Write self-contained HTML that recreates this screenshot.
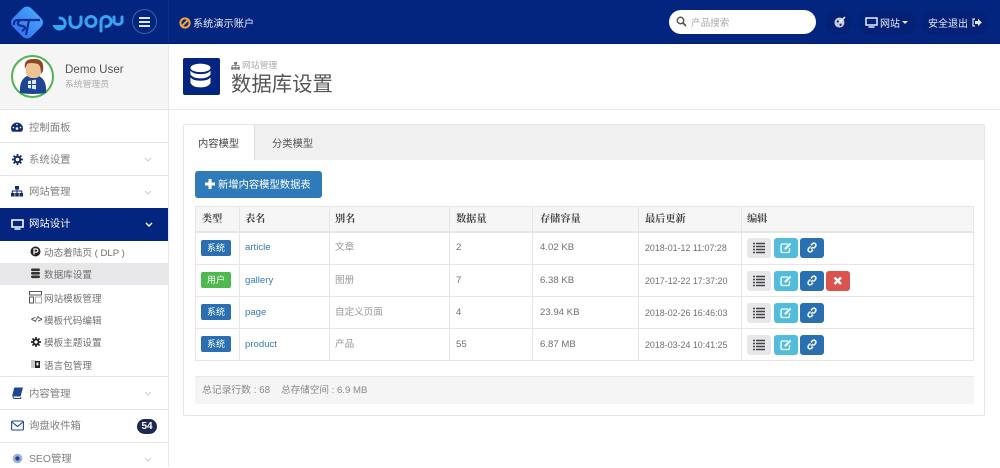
<!DOCTYPE html>
<html><head><meta charset="utf-8"><style>
*{box-sizing:border-box}
html,body{margin:0;padding:0}
body{width:1000px;height:466px;overflow:hidden;position:relative;background:#fff;font-family:"Liberation Sans","Noto Sans CJK SC",sans-serif;font-size:10px;color:#666;filter:blur(.25px)}
.a{position:absolute;white-space:nowrap}
.line{position:absolute;background:#e6e6e6}
.mi{position:absolute;left:0;width:168px;font-size:10.4px;color:#808080;line-height:16px}
.mi span{position:absolute;left:29px;top:0}
.sub{position:absolute;left:44px;font-size:9.6px;color:#707070;line-height:14px;white-space:nowrap}
.th{position:absolute;top:207px;height:26px;font:bold 10.2px/25px "Liberation Serif","Noto Serif CJK SC",serif;color:#444}
.td{position:absolute;font-size:9.6px;color:#707070;line-height:14px;white-space:nowrap}
.lnk{color:#337ab7}
.lab{position:absolute;left:201px;width:30px;height:16px;border-radius:2px;color:#fff;background:#2a6fb0;font-size:9px;line-height:17px;text-align:center}
.btn{position:absolute;width:24px;height:20px;border-radius:3px}
.btn svg{position:absolute;left:6px;top:4px}
.g{background:#e7e7e9}.c{background:#52bcdc}.b{background:#2a70b0}.r{background:#d9534f}
</style></head><body>
<!-- top bar -->
<div class="a" style="left:0;top:0;width:1000px;height:44px;background:#03257f"></div>
<div class="a" style="left:168px;top:0;width:1px;height:44px;background:#0a2f8c"></div>
<svg class="a" style="left:9px;top:5px" width="36" height="35" viewBox="0 0 36 35">
<defs><linearGradient id="lg" x1="1" y1="0" x2="0" y2="1"><stop offset="0" stop-color="#48b4fb"/><stop offset="1" stop-color="#3165ef"/></linearGradient></defs>
<path d="M14 3 Q18 0 22 3 L32 13 Q36 17.500 32 22 L22 32 Q18 35 14 32 L4 22 Q0 17.500 4 13Z" fill="url(#lg)"/>
<path d="M5 20 Q4 15 10 15 H31 M11 15 Q6 20 13 21 Q19 22 13 26 M20 15 L17 30" fill="none" stroke="#0b2c8f" stroke-width="2.200"/>
</svg>
<svg class="a" style="left:47px;top:12px" width="78" height="22" viewBox="0 0 78 22" fill="none" stroke="#3aa4f2" stroke-width="3" stroke-linecap="round">
<path d="M13 6 A5.500 5.500 0 1 1 8 14.500 H16"/>
<path d="M23 5 V10 A5 5 0 0 0 34 10 V5"/>
<circle cx="44" cy="9.500" r="5"/>
<path d="M54 19 V9.500 A5 5 0 1 1 59 14.500"/>
<path d="M67 5 V10 A4.500 4.500 0 0 0 75 10 V5"/>
</svg>
<div class="a" style="left:132px;top:9px;width:25px;height:25px;border:1px solid #40609f;border-radius:50%"></div>
<div class="a" style="left:139px;top:17px;width:11px;height:2px;background:#dfe6f5;box-shadow:0 4px 0 #dfe6f5,0 8px 0 #dfe6f5"></div>
<svg class="a" style="left:179px;top:17px" width="12" height="12" viewBox="0 0 12 12"><circle cx="6" cy="6" r="4.600" fill="none" stroke="#f0a63c" stroke-width="2"/><path d="M2.800 9.200L9.200 2.800" stroke="#f0a63c" stroke-width="2"/></svg>
<div class="a" style="left:193px;top:17px;font-size:10.200px;line-height:15px;color:#e6ebf6">系统演示账户</div>
<div class="a" style="left:669px;top:10px;width:147px;height:24px;background:#fff;border-radius:12px"></div>
<svg class="a" style="left:676px;top:16px" width="11" height="11" viewBox="0 0 11 11"><circle cx="4.500" cy="4.500" r="3.200" fill="none" stroke="#555" stroke-width="1.500"/><path d="M7 7L10 10" stroke="#555" stroke-width="1.800"/></svg>
<div class="a" style="left:691px;top:17px;font-size:9.600px;line-height:14px;color:#aaa">产品搜索</div>
<div class="a" style="left:825px;top:10px;width:27px;height:25px;border-radius:13px;background:#032277"></div>
<svg class="a" style="left:834px;top:16px" width="12" height="12" viewBox="0 0 11 11"><circle cx="5" cy="6" r="4.600" fill="#c5cde0"/><circle cx="3.500" cy="5" r="1" fill="#04216f"/><circle cx="6" cy="8" r="1" fill="#04216f"/><path d="M5 6L10 1" stroke="#eef" stroke-width="1.500"/></svg>
<div class="a" style="left:858px;top:10px;width:58px;height:25px;border-radius:13px;background:#032277"></div>
<svg class="a" style="left:865px;top:17px" width="13" height="11" viewBox="0 0 13 11"><path d="M1 1H12V8H1Z" fill="none" stroke="#e6ebf5" stroke-width="1.500"/><path d="M3.500 10H9.500" stroke="#e6ebf5" stroke-width="1.500"/></svg>
<div class="a" style="left:880px;top:17px;font-size:10px;line-height:15px;color:#e6ebf6">网站</div>
<div class="a" style="left:902px;top:21px;border:3px solid transparent;border-top:3.500px solid #e6ebf5;border-bottom:0"></div>
<div class="a" style="left:921px;top:10px;width:68px;height:25px;border-radius:13px;background:#032277"></div>
<div class="a" style="left:928px;top:17px;font-size:10px;line-height:15px;color:#e6ebf6">安全退出</div>
<svg class="a" style="left:972px;top:18px" width="10" height="9" viewBox="0 0 10 9"><path d="M3 1H1V8H3" fill="none" stroke="#dfe6f5" stroke-width="1.200"/><path d="M3 3H6V0.800L9.800 4.500L6 8.200V6H3Z" fill="#dfe6f5"/></svg>
<div class="a" style="left:0;top:43px;width:1000px;height:1px;background:#021d66"></div>

<!-- sidebar -->
<div class="a" style="left:0;top:44px;width:168px;height:66px;background:#f5f5f5"></div>
<div class="a" style="left:168px;top:44px;width:1px;height:422px;background:#e8e8e8"></div>
<div class="line" style="left:0;top:109px;width:168px;height:1px"></div>
<div class="a" style="left:11px;top:55px;width:43px;height:43px;border-radius:50%;background:#fff;border:2px solid #4db54f"></div>
<svg class="a" style="left:18px;top:58px" width="30" height="37" viewBox="0 0 30 37">
<path d="M2 35 Q1 22 9 18 H21 Q29 22 28 35 Q15 37 2 35Z" fill="#1d4591"/>
<rect x="8" y="3" width="15" height="17" rx="6" fill="#eec394"/>
<path d="M7 11 Q5 1 15 1 Q27 0 25 13 L23 16 Q23 8 20 6 Q12 4 9 6Z" fill="#8b4a25"/>
<path d="M10 23l3-.5v3.500h-3zM14 22.300l4-.7v4.400h-4zM10 27h3v3.500l-3-.5zM14 27h4v4.400l-4-.7z" fill="#dfe8f5"/>
</svg>
<div class="a" style="left:65px;top:62px;font-size:11.600px;line-height:15px;color:#555">Demo User</div>
<div class="a" style="left:65px;top:77px;font-size:8.800px;line-height:14px;color:#aaa">系统管理员</div>

<div class="line" style="left:0;top:142px;width:168px;height:1px"></div>
<div class="line" style="left:0;top:175px;width:168px;height:1px"></div>
<div class="line" style="left:0;top:376px;width:168px;height:1px"></div>
<div class="line" style="left:0;top:409px;width:168px;height:1px"></div>
<div class="line" style="left:0;top:442px;width:168px;height:1px"></div>

<div class="mi" style="top:121px"><span>控制面板</span></div>
<svg class="a" style="left:11px;top:122px" width="12" height="10" viewBox="0 0 12 10"><path d="M0 6.500A6 6 0 1 1 12 6.500Q12 8.500 10.500 9.800H1.500Q0 8.500 0 6.500Z" fill="#132d6e"/><circle cx="6" cy="6.500" r="1.300" fill="#fff"/><circle cx="2.500" cy="5.500" r=".8" fill="#fff"/><circle cx="9.500" cy="5.500" r=".8" fill="#fff"/><circle cx="6" cy="2.500" r=".8" fill="#fff"/></svg>
<div class="mi" style="top:153px"><span>系统设置</span></div>
<svg class="a" style="left:12px;top:154px" width="11" height="11" viewBox="0 0 11 11"><circle cx="5.500" cy="5.500" r="2.800" fill="none" stroke="#132d6e" stroke-width="2"/><path d="M5.500 0V2M5.500 9V11M0 5.500H2M9 5.500H11M1.600 1.600L3 3M8 8L9.400 9.400M1.600 9.400L3 8M8 3L9.400 1.600" stroke="#132d6e" stroke-width="1.800"/></svg>
<div class="mi" style="top:185px"><span>网站管理</span></div>
<svg class="a" style="left:11px;top:186px" width="12" height="11" viewBox="0 0 12 11" fill="#132d6e"><rect x="4" y="0" width="4" height="3.500"/><rect x="0" y="7" width="3.600" height="3.500"/><rect x="4.200" y="7" width="3.600" height="3.500"/><rect x="8.400" y="7" width="3.600" height="3.500"/><path d="M1.300 7V5H10.700V7M6 3V7" fill="none" stroke="#132d6e"/></svg>

<div class="a" style="left:0;top:208px;width:168px;height:33px;background:#03257f"></div>
<svg class="a" style="left:11px;top:219px" width="13" height="11" viewBox="0 0 13 11"><path d="M1 1H12V8H1Z" fill="none" stroke="#fff" stroke-width="1.600"/><path d="M3.500 10H9.500" stroke="#fff" stroke-width="1.500"/></svg>
<div class="a" style="left:29px;top:217px;font-size:10.400px;line-height:16px;color:#fff">网站设计</div>

<div class="a" style="left:0;top:263px;width:168px;height:22px;background:#e7e7e9"></div>
<svg class="a" style="left:30px;top:246px" width="11" height="11" viewBox="0 0 11 11"><circle cx="5.500" cy="5.500" r="5" fill="#222"/><path d="M4 8.500V3H6.300A1.600 1.600 0 0 1 6.300 6.200H4" fill="none" stroke="#fff" stroke-width="1.200"/></svg>
<div class="sub" style="top:247px">动态着陆页 ( DLP )</div>
<svg class="a" style="left:31px;top:268px" width="9" height="11" viewBox="0 0 9 11" fill="#333"><rect y="0.500" width="9" height="2.600" rx="1.200"/><rect y="4" width="9" height="2.600" rx="1.200"/><rect y="7.500" width="9" height="2.600" rx="1.200"/></svg>
<div class="sub" style="top:269px">数据库设置</div>
<svg class="a" style="left:29px;top:291px" width="13" height="13" viewBox="0 0 13 13" fill="none" stroke="#555"><rect x=".5" y=".5" width="12" height="3.500"/><rect x=".5" y="6" width="4" height="6"/><rect x="6.500" y="6" width="6" height="6" stroke="#aaa"/></svg>
<div class="sub" style="top:293px">网站模板管理</div>
<div class="a" style="left:31px;top:314px;font:bold 8px/13px 'Liberation Mono',monospace;color:#444;letter-spacing:-1.500px">&lt;/&gt;</div>
<div class="sub" style="top:315px">模板代码编辑</div>
<svg class="a" style="left:31px;top:337px" width="10" height="10" viewBox="0 0 11 11"><circle cx="5.500" cy="5.500" r="2.800" fill="none" stroke="#222" stroke-width="2"/><path d="M5.500 0V2M5.500 9V11M0 5.500H2M9 5.500H11M1.600 1.600L3 3M8 8L9.400 9.400M1.600 9.400L3 8M8 3L9.400 1.600" stroke="#222" stroke-width="1.800"/></svg>
<div class="sub" style="top:337px">模板主题设置</div>
<svg class="a" style="left:31px;top:359px" width="10" height="11" viewBox="0 0 10 11"><rect x="0" y="1" width="5" height="8" fill="#ccc"/><rect x="4" y="2" width="5" height="7" fill="#222"/><rect x="5.500" y="3.500" width="2" height="3" fill="#fff"/></svg>
<div class="sub" style="top:360px">语言包管理</div>

<div class="mi" style="top:387px"><span>内容管理</span></div>
<svg class="a" style="left:12px;top:387px" width="11" height="12" viewBox="0 0 11 12"><path d="M3 0.500H11L8.600 9.500H1.200Q0 9.500 0.300 8.200L2 1.500Q2.200 .5 3 .5Z" fill="#1f4690"/><path d="M1 9.600Q1 11.500 2.600 11.500H8.600L9 10.200" fill="none" stroke="#1f4690"/></svg>
<div class="mi" style="top:419px"><span>询盘收件箱</span></div>
<svg class="a" style="left:11px;top:420px" width="13" height="11" viewBox="0 0 13 11" fill="none" stroke="#1f4690" stroke-width="1.100"><rect x=".6" y="1" width="11.800" height="9" rx="1"/><path d="M1 2L6.500 6.500L12 2"/></svg>
<div class="a" style="left:137px;top:419px;width:20px;height:15px;border-radius:8px;background:#1e2a4d;color:#fff;font-weight:bold;font-size:10px;line-height:15px;text-align:center">54</div>
<div class="mi" style="top:452px"><span>SEO管理</span></div>
<svg class="a" style="left:12px;top:453px" width="11" height="11" viewBox="0 0 11 11"><circle cx="5.500" cy="5.500" r="4.800" fill="#9eb0d4"/><circle cx="5.500" cy="5.500" r="2.200" fill="#1f4690"/></svg>

<svg class="a" style="left:144px;top:157px" width="8" height="5" viewBox="0 0 8 5"><path d="M1 1L4 4L7 1" fill="none" stroke="#ccc"/></svg>
<svg class="a" style="left:144px;top:190px" width="8" height="5" viewBox="0 0 8 5"><path d="M1 1L4 4L7 1" fill="none" stroke="#ccc"/></svg>
<svg class="a" style="left:145px;top:222px" width="8" height="5" viewBox="0 0 8 5"><path d="M1 1L4 4L7 1" fill="none" stroke="#fff" stroke-width="1.400"/></svg>
<svg class="a" style="left:144px;top:391px" width="8" height="5" viewBox="0 0 8 5"><path d="M1 1L4 4L7 1" fill="none" stroke="#ccc"/></svg>
<svg class="a" style="left:144px;top:457px" width="8" height="5" viewBox="0 0 8 5"><path d="M1 1L4 4L7 1" fill="none" stroke="#ccc"/></svg>

<!-- page header -->
<div class="a" style="left:169px;top:109px;width:831px;height:1px;background:#e8e8e8"></div>
<div class="a" style="left:183px;top:58px;width:37px;height:37px;background:#03257f;border-radius:2px"></div>
<svg class="a" style="left:190px;top:63px" width="21" height="25" viewBox="0 0 22 26" fill="#fff"><ellipse cx="11" cy="5" rx="10.500" ry="4.500"/><path d="M.5 8Q3 11.500 11 11.500T21.500 8V12Q19 16 11 16T.5 12Z"/><path d="M.5 15Q3 18.500 11 18.500T21.500 15V21Q19 25.500 11 25.500T.5 21Z"/></svg>
<svg class="a" style="left:231px;top:62px" width="9" height="8" viewBox="0 0 12 11" fill="#777"><rect x="4" y="0" width="4" height="3.500"/><rect x="0" y="7" width="3.600" height="3.500"/><rect x="4.200" y="7" width="3.600" height="3.500"/><rect x="8.400" y="7" width="3.600" height="3.500"/><path d="M1.300 7V5H10.700V7M6 3V7" fill="none" stroke="#777"/></svg>
<div class="a" style="left:242px;top:59px;font-size:8.800px;line-height:13px;color:#aaa">网站管理</div>
<div class="a" style="left:231px;top:72px;font-size:20.400px;line-height:27px;color:#555">数据库设置</div>

<!-- panel -->
<div class="a" style="left:183px;top:124px;width:802px;height:292px;background:#fff;border:1px solid #e6e6e6;border-radius:2px"></div>
<div class="a" style="left:184px;top:125px;width:800px;height:35px;background:#f0f0f0"></div>
<div class="a" style="left:184px;top:125px;width:71px;height:35px;background:#fff;border-right:1px solid #ddd"></div>
<div class="a" style="left:198px;top:137px;font-size:10.300px;line-height:15px;color:#444">内容模型</div>
<div class="a" style="left:272px;top:137px;font-size:10.300px;line-height:15px;color:#555">分类模型</div>

<div class="a" style="left:195px;top:171px;width:127px;height:27px;background:#2f7ab8;border-radius:3px"></div>
<svg class="a" style="left:205px;top:179px" width="10" height="10" viewBox="0 0 10 10"><path d="M5 0V10M0 5H10" stroke="#fff" stroke-width="3"/></svg>
<div class="a" style="left:218px;top:178px;font-size:10.300px;line-height:15px;color:#fff">新增内容模型数据表</div>

<!-- table -->
<div class="a" style="left:195px;top:206px;width:779px;height:26px;background:#f6f6f6"></div>
<div class="line" style="left:195px;top:206px;width:779px;height:1px"></div>
<div class="line" style="left:195px;top:231px;width:779px;height:2px"></div>
<div class="line" style="left:195px;top:264px;width:779px;height:1px"></div>
<div class="line" style="left:195px;top:296px;width:779px;height:1px"></div>
<div class="line" style="left:195px;top:328px;width:779px;height:1px"></div>
<div class="line" style="left:195px;top:360px;width:779px;height:1px"></div>
<div class="line" style="left:195px;top:206px;width:1px;height:155px"></div>
<div class="line" style="left:239px;top:206px;width:1px;height:155px"></div>
<div class="line" style="left:329px;top:206px;width:1px;height:155px"></div>
<div class="line" style="left:449px;top:206px;width:1px;height:155px"></div>
<div class="line" style="left:532px;top:206px;width:1px;height:155px"></div>
<div class="line" style="left:638px;top:206px;width:1px;height:155px"></div>
<div class="line" style="left:741px;top:206px;width:1px;height:155px"></div>
<div class="line" style="left:973px;top:206px;width:1px;height:155px"></div>

<div class="th" style="left:202px">类型</div>
<div class="th" style="left:245px">表名</div>
<div class="th" style="left:335px">别名</div>
<div class="th" style="left:456px">数据量</div>
<div class="th" style="left:540px">存储容量</div>
<div class="th" style="left:645px">最后更新</div>
<div class="th" style="left:747px">编辑</div>

<div class="lab" style="top:240px">系统</div>
<div class="lab" style="top:272px;background:#4fb84f">用户</div>
<div class="lab" style="top:304px">系统</div>
<div class="lab" style="top:336px">系统</div>

<div class="td lnk" style="left:245px;top:241px">article</div>
<div class="td lnk" style="left:245px;top:274px">gallery</div>
<div class="td lnk" style="left:245px;top:306px">page</div>
<div class="td lnk" style="left:245px;top:338px">product</div>
<div class="td" style="left:335px;top:241px;color:#999">文章</div>
<div class="td" style="left:335px;top:274px;color:#999">图册</div>
<div class="td" style="left:335px;top:306px;color:#999">自定义页面</div>
<div class="td" style="left:335px;top:338px;color:#999">产品</div>
<div class="td" style="left:456px;top:241px">2</div>
<div class="td" style="left:456px;top:274px">7</div>
<div class="td" style="left:456px;top:306px">4</div>
<div class="td" style="left:456px;top:338px">55</div>
<div class="td" style="left:540px;top:241px">4.02 KB</div>
<div class="td" style="left:540px;top:274px">6.38 KB</div>
<div class="td" style="left:540px;top:306px">23.94 KB</div>
<div class="td" style="left:540px;top:338px">6.87 MB</div>
<div class="td" style="left:645px;top:241px;font-size:8.900px">2018-01-12 11:07:28</div>
<div class="td" style="left:645px;top:274px;font-size:8.900px">2017-12-22 17:37:20</div>
<div class="td" style="left:645px;top:306px;font-size:8.900px">2018-02-26 16:46:03</div>
<div class="td" style="left:645px;top:338px;font-size:8.900px">2018-03-24 10:41:25</div>

<!-- buttons -->
<svg width="0" height="0" style="position:absolute"><defs>
<g id="l"><path d="M0 1.500H2M3 1.500H12M0 4.500H2M3 4.500H12M0 7.500H2M3 7.500H12M0 10.500H2M3 10.500H12" stroke="#444" stroke-width="1.500" fill="none"/></g>
<g id="e"><path d="M8 2H2.500Q1 2 1 3.500V9Q1 10.500 2.500 10.500H8Q9.500 10.500 9.500 9V6" fill="none" stroke="#fff" stroke-width="1.300"/><path d="M4.500 6L10 .8L11.300 2.200L6 7.500H4.500Z" fill="#fff"/></g>
<g id="k"><path d="M5 7L7 5M4.500 4.500L2.700 6.300A2 2 0 0 0 5.500 9.300L7 7.700M7.500 6.500L9.300 4.700A2 2 0 0 0 6.500 1.700L5 3.300" fill="none" stroke="#fff" stroke-width="1.500"/></g>
</defs></svg>
<div class="btn g" style="left:747px;top:238px"><svg width="12" height="12"><use href="#l"/></svg></div>
<div class="btn c" style="left:774px;top:238px"><svg width="12" height="12"><use href="#e"/></svg></div>
<div class="btn b" style="left:800px;top:238px"><svg width="12" height="12"><use href="#k"/></svg></div>
<div class="btn g" style="left:747px;top:271px"><svg width="12" height="12"><use href="#l"/></svg></div>
<div class="btn c" style="left:774px;top:271px"><svg width="12" height="12"><use href="#e"/></svg></div>
<div class="btn b" style="left:800px;top:271px"><svg width="12" height="12"><use href="#k"/></svg></div>
<div class="btn r" style="left:826px;top:271px"><svg width="12" height="12"><path d="M2.500 2.500L9 9M9 2.500L2.500 9" stroke="#fff" stroke-width="2.400"/></svg></div>
<div class="btn g" style="left:747px;top:303px"><svg width="12" height="12"><use href="#l"/></svg></div>
<div class="btn c" style="left:774px;top:303px"><svg width="12" height="12"><use href="#e"/></svg></div>
<div class="btn b" style="left:800px;top:303px"><svg width="12" height="12"><use href="#k"/></svg></div>
<div class="btn g" style="left:747px;top:335px"><svg width="12" height="12"><use href="#l"/></svg></div>
<div class="btn c" style="left:774px;top:335px"><svg width="12" height="12"><use href="#e"/></svg></div>
<div class="btn b" style="left:800px;top:335px"><svg width="12" height="12"><use href="#k"/></svg></div>

<!-- footer -->
<div class="a" style="left:195px;top:376px;width:779px;height:28px;background:#f5f5f5;border-top:1px solid #e8e8e8"></div>
<div class="a" style="left:202px;top:384px;font-size:9.800px;line-height:14px;color:#888">总记录行数 : 68</div>
<div class="a" style="left:281px;top:384px;font-size:9.600px;line-height:14px;color:#888">总存储空间 : 6.9 MB</div>
</body></html>
